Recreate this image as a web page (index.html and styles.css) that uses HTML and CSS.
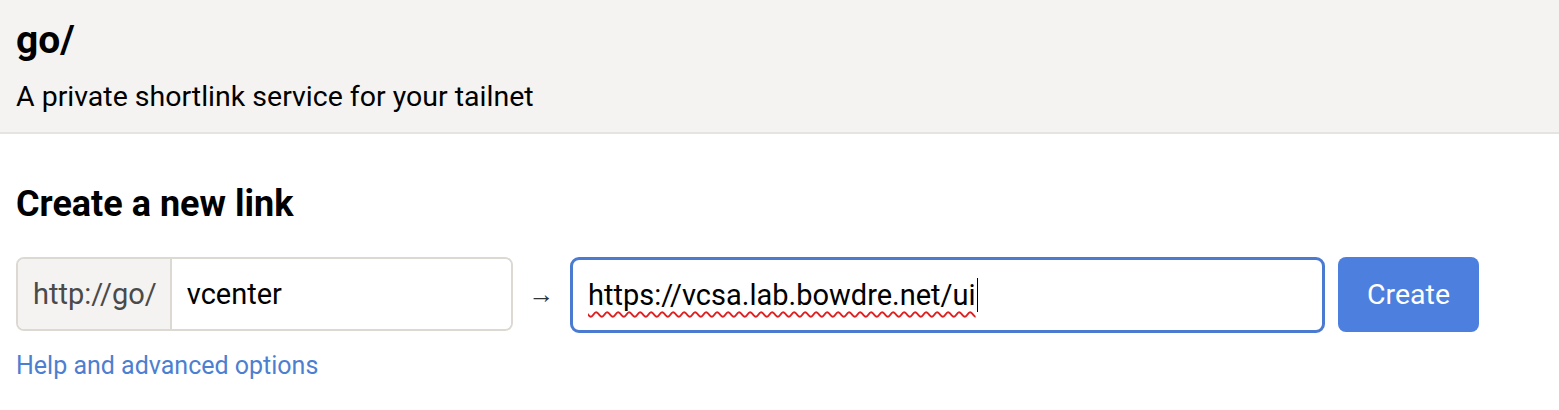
FILE: index.html
```html
<!DOCTYPE html>
<html>
<head>
<meta charset="utf-8">
<link rel="stylesheet" href="styles.css">
</head>
<body>
<header class="header">
  <h1 class="title">go/</h1>
  <p class="subtitle">A private shortlink service for your tailnet</p>
</header>
<main class="main">
  <h2 class="section-title">Create a new link</h2>
  <form class="create-form">
    <div class="short-group">
      <span class="prefix">http://go/</span>
      <input class="short-input" type="text" value="vcenter">
    </div>
    <span class="arrow">→</span>
    <div class="long-input"><span class="typed">https://vcsa.lab.bowdre.net/ui</span><span class="caret"></span></div>
    <button class="create-btn" type="button">Create</button>
  </form>
  <a class="help-link" href="#">Help and advanced options</a>
</main>
</body>
</html>
```
FILE: styles.css
```css
* { box-sizing: border-box; }
html, body { margin: 0; padding: 0; background: #fff; }
body { font-family: Roboto, "Liberation Sans", sans-serif; color: #000; }

.header {
  background: #f4f3f1;
  border-bottom: 2px solid #e6e4e1;
  height: 134px;
  padding: 16px 16px 0;
}
.title {
  margin: 0;
  font-size: 39px;
  font-weight: 700;
  line-height: 48px;
}
.subtitle {
  margin: 15px 0 0;
  font-size: 28.5px;
  line-height: 36px;
}

.main { padding: 0 16px; }
.section-title {
  margin: 48px 0 0;
  font-size: 36px;
  font-weight: 700;
  line-height: 44px;
}
.create-form {
  display: flex;
  align-items: flex-start;
  margin-top: 31px;
}
.short-group {
  display: flex;
  width: 497px;
  height: 74px;
  border: 2px solid #dcd8d2;
  border-radius: 8px;
  overflow: hidden;
}
.prefix {
  display: flex;
  align-items: center;
  padding: 0 13px 0 15px;
  background: #f4f3f1;
  border-right: 2px solid #dcd8d2;
  color: #4a4a4a;
  font-size: 29px;
}
.short-input {
  flex: 1;
  min-width: 0;
  border: 0;
  outline: none;
  font-family: inherit;
  font-size: 29px;
  padding: 0 15px;
  color: #000;
  background: #fff;
}
.arrow {
  width: 57px;
  height: 74px;
  display: flex;
  align-items: center;
  justify-content: center;
  font-size: 26px;
  color: #333;
}
.long-input {
  display: flex;
  align-items: center;
  width: 755px;
  height: 76px;
  border: 3px solid #4b7bd0;
  border-radius: 9px;
  padding: 0 15px;
  font-size: 29px;
}
.typed {
  text-decoration: underline wavy #e02020;
  text-decoration-thickness: 1.5px;
  text-underline-offset: 6px;
}
.caret {
  display: inline-block;
  width: 1px;
  height: 34px;
  background: #000;
  margin-left: 1px;
}
.create-btn {
  margin-left: 13px;
  width: 141px;
  height: 75px;
  border: 0;
  border-radius: 8px;
  background: #4d7fde;
  color: #fff;
  font-family: inherit;
  font-size: 28.5px;
}
.help-link {
  display: inline-block;
  margin-top: 18px;
  font-size: 25px;
  color: #4d7fd0;
  text-decoration: none;
}
```
